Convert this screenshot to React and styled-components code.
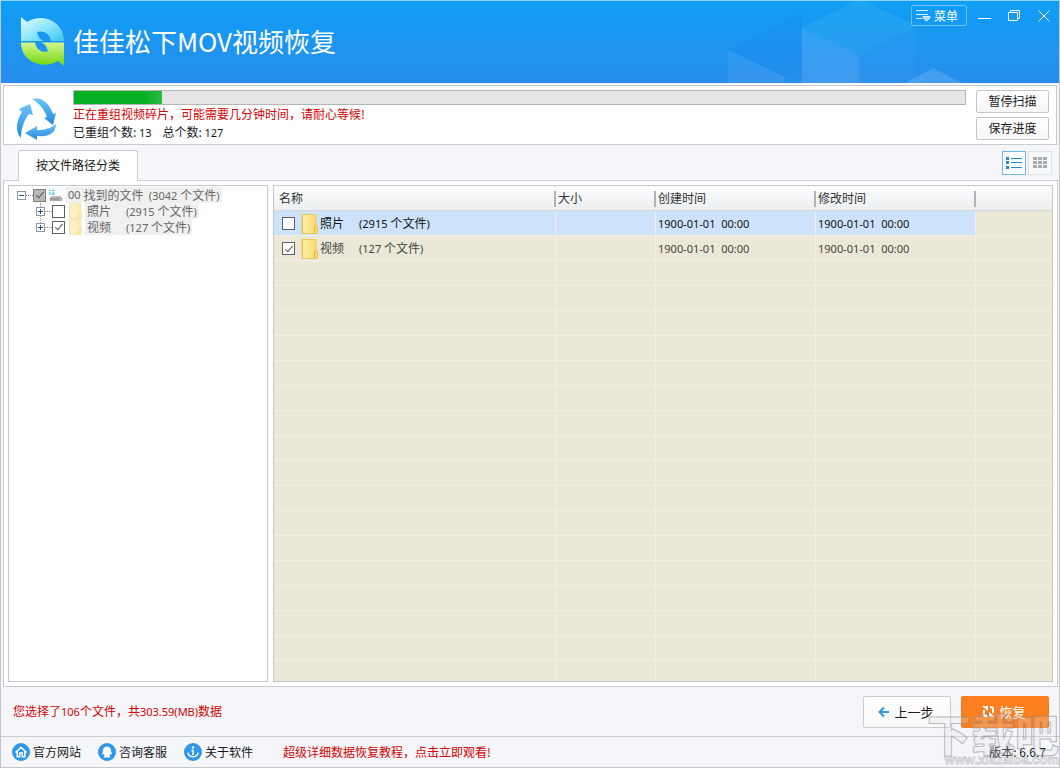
import React from "react";
import styled, { createGlobalStyle } from "styled-components";

const GlobalStyle = createGlobalStyle`
  *, *::before, *::after { box-sizing: border-box; }
  body { margin: 0; background: #f6f7f9; }
  body, button, input, table {
    font-family: "Noto Sans", "Noto Sans CJK SC", sans-serif;
    font-size: 12px;
    line-height: 16px;
    color: #1a1a1a;
  }
`;

const CJK = `"Noto Sans CJK SC", sans-serif`;

const Window = styled.div`
  position: relative;
  display: flex;
  flex-direction: column;
  min-height: 100vh;
  border: 1px solid #c3c6cb;
  border-top-color: #8cd4f4;
  background: #f5f6f9;
  overflow: hidden;
`;

/* ---------- header ---------- */

const Header = styled.header`
  position: relative;
  display: flex;
  align-items: flex-start;
  height: 82px;
  flex: none;
  background: linear-gradient(#0f9ef6, #288dec);
`;

const HeaderArt = styled.svg`
  position: absolute;
  top: 0;
  right: 97px;
`;

const Brand = styled.div`
  display: flex;
  align-items: center;
  gap: 7px;
  height: 82px;
  padding-left: 20px;
  flex: 1;
`;

const Title = styled.h1`
  margin: 0 0 2px;
  font: 400 26px/40px "Noto Sans CJK SC", sans-serif;
  color: #fff;
`;

const WindowControls = styled.div`
  position: relative;
  display: flex;
  align-items: center;
  padding: 4px 0 0;
`;

const MenuButton = styled.button`
  display: flex;
  align-items: center;
  gap: 3px;
  width: 56px;
  height: 21px;
  padding: 0 4px;
  margin-right: 2px;
  border: 1px solid #6cc3fa;
  border-radius: 2px;
  background: transparent;
  font-family: ${CJK};
  color: #fff;
  white-space: nowrap;
`;

const ControlButton = styled.button`
  display: flex;
  align-items: center;
  justify-content: center;
  width: 30px;
  height: 21px;
  padding: 0;
  border: 0;
  background: transparent;
`;

/* ---------- scan status ---------- */

const StatusPanel = styled.section`
  display: flex;
  align-items: flex-start;
  gap: 10px;
  height: 60px;
  flex: none;
  margin: 2px 2px 0;
  padding: 4px 7px 4px 12px;
  border: 1px solid #c9cbd0;
  background: #fff;
`;

const RecycleIcon = styled.svg`
  flex: none;
  margin-top: 7px;
`;

const StatusBody = styled.div`
  flex: 1;
  min-width: 0;
  padding-left: 6px;
`;

const Progress = styled.progress`
  display: block;
  appearance: none;
  width: 100%;
  height: 15px;
  border: 1px solid #b4b4b4;
  background: #e6e6e6;
  &::-webkit-progress-bar { background: #e6e6e6; }
  &::-webkit-progress-value { background: linear-gradient(90deg, #06b025 80%, #2cba46); }
`;

const StatusLine = styled.p`
  margin: 0;
  height: 18px;
  line-height: 18px;
  font-family: ${CJK};
  white-space: pre;
  color: ${(p) => (p.$alert ? "#d60000" : "#1a1a1a")};
`;

const StatusActions = styled.div`
  display: flex;
  flex-direction: column;
  gap: 4px;
`;

const SmallButton = styled.button`
  width: 73px;
  height: 23px;
  padding: 0 0 2px;
  border: 1px solid #c3c5c9;
  border-radius: 2px;
  background: linear-gradient(#fff, #f6f6f8);
  font-family: ${CJK};
`;

const Num = styled.span`
  font-family: "Noto Sans", sans-serif;
  font-size: 11px;
`;

/* ---------- tab row ---------- */

const TabRow = styled.div`
  display: flex;
  align-items: flex-end;
  justify-content: space-between;
  height: 35px;
  flex: none;
  padding: 0 7px 0 17px;
`;

const Tab = styled.button`
  position: relative;
  z-index: 1;
  width: 120px;
  height: 31px;
  margin-bottom: -1px;
  padding: 0 0 2px;
  border: 1px solid #c9cbd0;
  border-bottom: 0;
  border-radius: 3px 3px 0 0;
  background: #fff;
  font-family: ${CJK};
`;

const ViewSwitch = styled.div`
  display: flex;
  gap: 2px;
  padding-bottom: 5px;
`;

const ViewButton = styled.button`
  display: flex;
  align-items: center;
  justify-content: center;
  width: 24px;
  height: 24px;
  padding: 0;
  border: 1px solid ${(p) => (p.$active ? "#6fb6ee" : "#e0e2e6")};
  background: ${(p) => (p.$active ? "#fff" : "#f8f9fb")};
`;

/* ---------- main area ---------- */

const Main = styled.main`
  display: flex;
  gap: 5px;
  flex: 1;
  margin: 0 1px 0 2px;
  padding: 4px;
  border: 1px solid #c9cbd0;
  background: #fff;
`;

const TreePane = styled.nav`
  width: 260px;
  flex: none;
  padding: 1px 0 0 8px;
  border: 1px solid #c5c7cc;
  background: #fff;
`;

const TreeList = styled.ul`
  position: relative;
  margin: 0;
  padding: 0 0 0 ${(p) => (p.$nested ? "19px" : "0")};
  list-style: none;
  &::before {
    content: "";
    display: ${(p) => (p.$nested ? "block" : "none")};
    position: absolute;
    left: 23px;
    top: 0;
    height: 24px;
    border-left: 1px dotted #999;
  }
`;

const TreeRow = styled.div`
  position: relative;
  display: flex;
  align-items: center;
  height: 16px;
`;

const Expander = styled.button`
  display: flex;
  width: 9px;
  height: 9px;
  padding: 0;
  border: 1px solid #8b99b0;
  background: #fff;
`;

const Connector = styled.span`
  width: 7px;
  border-top: 1px dotted #888;
`;

const CheckBox = styled.input.attrs({ type: "checkbox" })`
  appearance: none;
  display: flex;
  align-items: center;
  justify-content: center;
  flex: none;
  width: 13px;
  height: 13px;
  margin: 0;
  border: 1px solid ${(p) => (p.$dim ? "#808080" : "#5c6067")};
  background: ${(p) => (p.$dim ? "#b9b9b9" : "#fff")};
  &:checked::after {
    content: "";
    width: 4px;
    height: 8px;
    margin-bottom: 2px;
    border: solid #555;
    border-width: 0 1px 1px 0;
    transform: rotate(40deg);
  }
`;

const TreeLabel = styled.label`
  display: flex;
  align-items: center;
  height: 16px;
  margin-left: 3px;
  padding: 0 2px;
  background: #f0f0f0;
  font-family: ${CJK};
  color: #666;
  white-space: pre;
`;

const TreeIcon = styled.span`
  display: flex;
  width: ${(p) => (p.$wide ? "15px" : "13px")};
  margin-left: ${(p) => (p.$wide ? "2px" : "4px")};
  opacity: ${(p) => (p.$wide ? 1 : 0.55)};
`;

const TablePane = styled.div`
  display: flex;
  flex: 1;
  min-width: 0;
  border: 1px solid #c5c7cc;
  background: #ebe8d7;
`;

const FileTable = styled.table`
  width: 100%;
  table-layout: fixed;
  border-collapse: separate;
  border-spacing: 0;
`;

const Th = styled.th`
  position: relative;
  height: 25px;
  padding: 0 2px;
  border-bottom: 1px solid #d5d7da;
  background: linear-gradient(#fcfcfd, #eceef0);
  font-family: ${CJK};
  font-weight: 400;
  text-align: left;
  color: #333;
  &:first-child { padding-left: 5px; }
  &:not(:last-child)::after {
    content: "";
    position: absolute;
    right: 0;
    top: 5px;
    height: 16px;
    border-right: 2px solid #b0b2b5;
  }
`;

const Td = styled.td`
  height: 25px;
  padding: 1px 2px 0;
  border-bottom: 1px solid #f2f0e6;
  border-right: ${(p) => (p.$last ? "0" : "1px solid #f2f0e6")};
  background: ${(p) => (p.$selected ? "#cde3fb" : "transparent")};
  color: ${(p) => (p.$selected ? "#111" : "#444")};
  white-space: pre;
`;

const FillerTd = styled.td`
  padding: 0;
  border-right: ${(p) => (p.$last ? "0" : "1px solid #f2f0e6")};
  background: repeating-linear-gradient(transparent 0 24px, #f2f0e6 24px 25px);
`;

const NameCell = styled.label`
  display: flex;
  align-items: center;
  gap: 6px;
  padding-left: 6px;
  font-family: ${CJK};
`;

const NameText = styled.span`
  display: flex;
  align-items: center;
  gap: 2px;
`;

const FileCount = styled.span`
  margin-left: 15px;
`;

/* ---------- footer ---------- */

const ActionBar = styled.div`
  display: flex;
  align-items: center;
  gap: 10px;
  height: 49px;
  flex: none;
  padding: 0 10px 0 12px;
`;

const Summary = styled.p`
  flex: 1;
  margin: 0;
  font-family: ${CJK};
  color: #d60000;
`;

const ActionButton = styled.button`
  display: flex;
  align-items: center;
  justify-content: center;
  gap: 4px;
  width: 88px;
  height: 32px;
  padding: 0 2px 0 0;
  border: 1px solid ${(p) => (p.$primary ? "#fb7a1c" : "#c9cbd0")};
  border-radius: 2px;
  background: ${(p) => (p.$primary ? "#fd7f20" : "linear-gradient(#fff, #f7f7f9)")};
  font-family: ${CJK};
  font-size: 13px;
  color: ${(p) => (p.$primary ? "#fff" : "#1a1a1a")};
`;

const LinkBar = styled.footer`
  display: flex;
  align-items: center;
  gap: 17px;
  height: 31px;
  flex: none;
  padding: 0 13px 0 11px;
  border-top: 1px solid #c9cbd0;
`;

const FooterLink = styled.a`
  display: flex;
  align-items: center;
  gap: 3px;
  margin-left: ${(p) => (p.$alert ? "13px" : "0")};
  font-family: ${CJK};
  color: ${(p) => (p.$alert ? "#d60000" : "#1a1a1a")};
  text-decoration: none;
`;

const Version = styled.span`
  margin-left: auto;
  font-family: ${CJK};
`;

const Watermark = styled.div`
  position: absolute;
  right: 0;
  bottom: 0;
  display: flex;
  flex-direction: column;
  align-items: flex-end;
  pointer-events: none;
  color: rgba(225, 226, 230, 0.25);
`;

const WatermarkName = styled.span`
  font: 900 44px/40px "Noto Sans CJK SC", sans-serif;
  -webkit-text-stroke: 1px rgba(125, 125, 130, 0.5);
`;

const WatermarkUrl = styled.span`
  font: 700 13px/14px "Liberation Sans", sans-serif;
  -webkit-text-stroke: 1px rgba(150, 150, 155, 0.4);
`;

/* ---------- drawings ---------- */

const Logo = () => (
  <svg width="45" height="50" viewBox="0 0 45 50" aria-hidden="true">
    <defs>
      <linearGradient id="lb" x1="0" y1="0" x2="1" y2="1">
        <stop offset="0" stopColor="#e4fbff" />
        <stop offset="0.5" stopColor="#8fe6fb" />
        <stop offset="1" stopColor="#3cc4f2" />
      </linearGradient>
      <linearGradient id="lg" x1="0" y1="0" x2="0" y2="1">
        <stop offset="0" stopColor="#d6f58c" />
        <stop offset="1" stopColor="#6fd60f" />
      </linearGradient>
    </defs>
    <path d="M0 0 L6 5 C21 -5 43 4 43 24 H30 C29 17 23 13 16 15 C17 19 18 22 23 24 H0Z" fill="url(#lb)" />
    <path d="M43 49 L37 44 C22 53 0 45 0 25.500 H14 C15 32 20 36 27 34.500 C26 31 25 27 20 25.500 H43Z" fill="url(#lg)" />
  </svg>
);

const Cubes = () => (
  <HeaderArt width="234" height="82" viewBox="728 1 234 82" aria-hidden="true">
    <path d="M728 50 L802 12 V70 L785 77Z" fill="#1687ea" opacity="0.3" />
    <path d="M728 50 L785 77 V83 H728Z" fill="#fff" opacity="0.07" />
    <path d="M802 28 L860 -1 L917 26 L859 56Z" fill="#3fb6ee" opacity="0.3" />
    <path d="M802 28 L859 56 V83 H802Z" fill="#fff" opacity="0.11" />
    <path d="M859 56 L917 26 V83 H859Z" fill="#fff" opacity="0.03" />
    <path d="M905 83 L933 68 L962 83Z" fill="#fff" opacity="0.14" />
  </HeaderArt>
);

const MenuIcon = () => (
  <svg width="15" height="13" viewBox="0 0 15 13" fill="none" stroke="#d6efff" aria-hidden="true">
    <path d="M0 1.500H12M0 5.500H12M0 9.500H6" />
    <path d="M7 7.500H14V9L10.500 12L7 9Z" fill="#a8dbfb" />
  </svg>
);

const Recycle = () => (
  <RecycleIcon width="41" height="44" viewBox="0 0 41 44" aria-hidden="true">
    <defs>
      <linearGradient id="rc" x1="0" y1="0" x2="0" y2="1">
        <stop offset="0" stopColor="#6cc4f7" />
        <stop offset="1" stopColor="#2288e2" />
      </linearGradient>
    </defs>
    <g fill="url(#rc)">
      <path d="M5 41 C-1 35 0 24 6 15 L3 12 L14 7 L17 18 L13 17 C8 23 5 32 5 41Z" />
      <path d="M16 2 C27 -1 34 8 37 17 L40 16 L37 28 L28 21 L31 20 C28 12 23 6 16 2Z" />
      <path d="M40 27 C40 36 33 40 21 39 L21 43 L9 36 L21 29 V33 C29 33 35 31 40 27Z" />
    </g>
  </RecycleIcon>
);

const ExpanderMark = ({ open }) => (
  <svg width="7" height="7" viewBox="0 0 7 7" stroke="#34517d" aria-hidden="true">
    <path d={open ? "M1 3.500H6" : "M1 3.500H6M3.500 1V6"} />
  </svg>
);

const Folder = ({ small }) => (
  <svg width={small ? 13 : 17} height={small ? 16 : 20} viewBox="0 0 17 20" preserveAspectRatio="none" aria-hidden="true">
    <defs>
      <linearGradient id="fd" x1="0" y1="0" x2="1" y2="0">
        <stop offset="0" stopColor="#fff0a8" />
        <stop offset="1" stopColor="#f8d768" />
      </linearGradient>
    </defs>
    <path d="M1 0.500H15V11L16.500 12V19.500H1Z" fill="url(#fd)" stroke="#ecc95c" />
    <path d="M13.500 19V13L15 11" fill="none" stroke="#e2b73c" />
    <path d="M1.500 1V19" stroke="#e8c04c" />
  </svg>
);

const Drive = () => (
  <svg width="16" height="14" viewBox="0 0 16 14" aria-hidden="true">
    <path d="M1 1h2v2h-2zM4 1h3v2h-3zM1 4h2v3h-2zM4 4h3v3h-3z" fill="#74d5e2" />
    <path d="M4 8H13L15 10V13H2V10Z" fill="#b7babd" />
    <path d="M2 10H15V13H2Z" fill="#96999c" />
    <path d="M12 11h2v1h-2z" fill="#d8f0d0" />
  </svg>
);

const FooterIcon = ({ kind }) => (
  <svg width="18" height="18" viewBox="0 0 18 18" fill="none" stroke="#fff" strokeWidth="1.500" aria-hidden="true">
    <circle cx="9" cy="9" r="9" fill="#2f96e8" stroke="none" />
    {kind === "home" && <path d="M3.500 9.500L9 4.200L14.500 9.500M5.200 8.500V13.700H7.700V10H10.300V13.700H12.800V8.500" />}
    {kind === "chat" && (
      <path d="M9 3.500C6.500 3.500 5 5.500 5 7.500L4 11.500L5.500 11L6.500 13L5.500 14.500H12.500L11.500 13L12.500 11L14 11.500L13 7.500C13 5.500 11.500 3.500 9 3.500Z" fill="#fff" stroke="none" />
    )}
    {kind === "about" && (
      <>
        <path d="M7.500 7.500H9V12M4 9.500C4 15 14 15 14 9.500" />
        <circle cx="9" cy="4.500" r="1.200" fill="#fff" stroke="none" />
      </>
    )}
  </svg>
);

/* ---------- data ---------- */

const FILES = [
  { id: "photo", name: "照片", count: 2915, checked: false, date: "1900-01-01  00:00" },
  { id: "video", name: "视频", count: 127, checked: true, date: "1900-01-01  00:00" },
];

const Count = ({ value }) => (
  <span>
    <Num>({value} </Num>个文件<Num>)</Num>
  </span>
);

export default function App() {
  return (
    <>
      <GlobalStyle />
      <Window>
        <Header>
          <Cubes />
          <Brand>
            <Logo />
            <Title>佳佳松下MOV视频恢复</Title>
          </Brand>
          <WindowControls>
            <MenuButton>
              <MenuIcon />
              菜单
            </MenuButton>
            <ControlButton aria-label="最小化">
              <svg width="13" height="11" viewBox="0 0 13 11" stroke="#fff"><path d="M0 8.500H13" /></svg>
            </ControlButton>
            <ControlButton aria-label="还原">
              <svg width="13" height="11" viewBox="0 0 13 11" stroke="#fff" fill="none">
                <path d="M0.500 2.500H9.500V10.500H0.500ZM2.500 2.500V0.500H11.500V8.500H9.500" />
              </svg>
            </ControlButton>
            <ControlButton aria-label="关闭">
              <svg width="12" height="12" viewBox="0 0 12 12" stroke="#fff"><path d="M0.500 0.500L11.500 11.500M11.500 0.500L0.500 11.500" /></svg>
            </ControlButton>
          </WindowControls>
        </Header>

        <StatusPanel>
          <Recycle />
          <StatusBody>
            <Progress value="88" max="892" aria-label="扫描进度" />
            <StatusLine $alert>正在重组视频碎片，可能需要几分钟时间，请耐心等候!</StatusLine>
            <StatusLine>
              已重组个数: <Num>13</Num>{"    "}总个数: <Num>127</Num>
            </StatusLine>
          </StatusBody>
          <StatusActions>
            <SmallButton>暂停扫描</SmallButton>
            <SmallButton>保存进度</SmallButton>
          </StatusActions>
        </StatusPanel>

        <TabRow>
          <Tab>按文件路径分类</Tab>
          <ViewSwitch>
            <ViewButton $active aria-label="列表">
              <svg width="16" height="12" viewBox="0 0 16 12" fill="#2f86cc">
                <path d="M0 0h3v3h-3zM0 4h3v3h-3zM0 9h3v3h-3zM5 1h11v1h-11zM5 5h11v1h-11zM5 10h11v1h-11z" />
              </svg>
            </ViewButton>
            <ViewButton aria-label="图标">
              <svg width="14" height="12" viewBox="0 0 14 12" fill="#a9abae">
                <path d="M0 0h4v3h-4zM5 0h4v3h-4zM10 0h4v3h-4zM0 4h4v3h-4zM5 4h4v3h-4zM10 4h4v3h-4zM0 8h4v3h-4zM5 8h4v3h-4zM10 8h4v3h-4z" />
              </svg>
            </ViewButton>
          </ViewSwitch>
        </TabRow>

        <Main>
          <TreePane>
            <TreeList>
              <li>
                <TreeRow>
                  <Expander aria-label="折叠"><ExpanderMark open /></Expander>
                  <Connector />
                  <CheckBox id="tree-all" $dim defaultChecked />
                  <TreeIcon $wide><Drive /></TreeIcon>
                  <TreeLabel htmlFor="tree-all">
                    <Num>00 </Num>找到的文件{"  "}<Count value={3042} />
                  </TreeLabel>
                </TreeRow>
                <TreeList $nested>
                  {FILES.map((f) => (
                    <li key={f.id}>
                      <TreeRow>
                        <Expander aria-label="展开"><ExpanderMark /></Expander>
                        <Connector />
                        <CheckBox id={`tree-${f.id}`} defaultChecked={f.checked} />
                        <TreeIcon><Folder small /></TreeIcon>
                        <TreeLabel htmlFor={`tree-${f.id}`}>
                          {f.name}<FileCount><Count value={f.count} /></FileCount>
                        </TreeLabel>
                      </TreeRow>
                    </li>
                  ))}
                </TreeList>
              </li>
            </TreeList>
          </TreePane>

          <TablePane>
            <FileTable>
              <colgroup>
                <col style={{ width: 282 }} />
                <col style={{ width: 100 }} />
                <col style={{ width: 160 }} />
                <col style={{ width: 160 }} />
                <col />
              </colgroup>
              <thead>
                <tr>
                  <Th>名称</Th>
                  <Th>大小</Th>
                  <Th>创建时间</Th>
                  <Th>修改时间</Th>
                  <Th />
                </tr>
              </thead>
              <tbody>
                {FILES.map((f, i) => (
                  <tr key={f.id}>
                    <Td $selected={i === 0}>
                      <NameCell>
                        <CheckBox defaultChecked={f.checked} />
                        <NameText>
                          <Folder />
                          <span>{f.name}<FileCount><Count value={f.count} /></FileCount></span>
                        </NameText>
                      </NameCell>
                    </Td>
                    <Td $selected={i === 0} />
                    <Td $selected={i === 0}><Num>{f.date}</Num></Td>
                    <Td $selected={i === 0}><Num>{f.date}</Num></Td>
                    <Td $last />
                  </tr>
                ))}
                <tr>
                  <FillerTd />
                  <FillerTd />
                  <FillerTd />
                  <FillerTd />
                  <FillerTd $last />
                </tr>
              </tbody>
            </FileTable>
          </TablePane>
        </Main>

        <ActionBar>
          <Summary>
            您选择了<Num>106</Num>个文件，共<Num>303.59(MB)</Num>数据
          </Summary>
          <ActionButton>
            <svg width="12" height="12" viewBox="0 0 12 12" fill="none" stroke="#2f96e8" strokeWidth="2" aria-hidden="true">
              <path d="M11 6H2M6 1.500L1.500 6L6 10.500" />
            </svg>
            上一步
          </ActionButton>
          <ActionButton $primary>
            <svg width="13" height="13" viewBox="0 0 13 13" fill="none" stroke="#fff" strokeWidth="2" aria-hidden="true">
              <path d="M5 11H4C2.500 11 2 10 2 8.500V5M8 2H9C10.500 2 11 3 11 4.500V8" />
              <path d="M0 1L6 1V6ZM13 12L7 12V7Z" fill="#fff" stroke="none" />
            </svg>
            恢复
          </ActionButton>
        </ActionBar>

        <LinkBar>
          <FooterLink href="#site"><FooterIcon kind="home" />官方网站</FooterLink>
          <FooterLink href="#service"><FooterIcon kind="chat" />咨询客服</FooterLink>
          <FooterLink href="#about"><FooterIcon kind="about" />关于软件</FooterLink>
          <FooterLink href="#tutorial" $alert>超级详细数据恢复教程，点击立即观看!</FooterLink>
          <Version>版本: 6.6.7</Version>
        </LinkBar>

        <Watermark aria-hidden="true">
          <WatermarkName>下载吧</WatermarkName>
          <WatermarkUrl>www.xiazaiba.com</WatermarkUrl>
        </Watermark>
      </Window>
    </>
  );
}
